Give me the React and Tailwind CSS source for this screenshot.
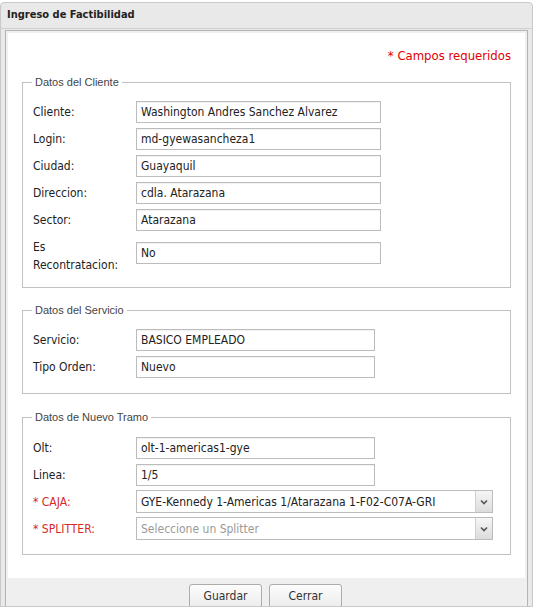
import React from 'react';

const ui = { fontFamily: '"DejaVu Sans Condensed", "Liberation Sans", sans-serif' };
const legendFont = { fontFamily: '"Liberation Sans", Arial, sans-serif' };

function Field({ label, value, wide, required, tall }) {
  return (
    <div className="flex items-center">
      <div className={`w-[103px] shrink-0 text-[12px] leading-[18px] ${required ? 'text-[#d42a2a]' : 'text-[#222]'}`}>
        {label}
      </div>
      <div className={`${wide ? 'w-[245px]' : 'w-[239px]'} h-[22px] border border-[#bcbcbc] bg-white px-[4px] flex items-center text-[12px] text-[#222] shadow-[inset_0_1px_1px_rgba(0,0,0,0.06)] ${tall ? 'self-start mt-[4px]' : ''}`}>
        {value}
      </div>
    </div>
  );
}

function Select({ label, value, placeholder }) {
  return (
    <div className="flex items-center">
      <div className="w-[103px] shrink-0 text-[12px] leading-[18px] text-[#d42a2a]">{label}</div>
      <div className="w-[357px] h-[23px] border border-[#bcbcbc] bg-white flex items-stretch">
        <div className={`flex-1 px-[4px] flex items-center text-[12px] ${placeholder ? 'text-[#9a9a9a]' : 'text-[#222]'}`}>
          {value}
        </div>
        <div className="w-[17px] border-l border-[#d0d0d0] bg-gradient-to-b from-[#f6f6f6] to-[#dcdcdc] flex items-center justify-center">
          <svg width="8" height="6" viewBox="0 0 8 6">
            <path d="M1 1.5 L4 4.5 L7 1.5" fill="none" stroke="#555" strokeWidth="1.6" />
          </svg>
        </div>
      </div>
    </div>
  );
}

function Group({ title, children, className }) {
  return (
    <fieldset className={`border border-[#c2c2c2] px-[10px] ${className}`}>
      <legend className="-ml-[1px] px-[3px] text-[11px] leading-[13px] text-[#444]" style={legendFont}>{title}</legend>
      {children}
    </fieldset>
  );
}

export default function App() {
  return (
    <div className="w-[533px] h-[607px] overflow-hidden bg-white" style={ui}>
      <div className="mt-[2px] h-[605px] border border-[#c9c9c9] rounded-t-[4px] bg-[#e9e9e9] flex flex-col overflow-hidden">
        <div className="h-[26px] shrink-0 px-[6px] flex items-center text-[11px] font-bold text-[#222] border-b border-[#cfcfcf]">
          Ingreso de Factibilidad
        </div>
        <div className="flex-1 px-[4px] pt-[1px]">
          <div className="h-full border-x border-t border-[#b4b4b4] bg-[#efefef]">
            <div className="bg-white h-[547px] mx-[1px] mt-[1px] px-[14px] pt-[15px] border border-[#f0f0f0]">
              <div className="text-right text-[13px] leading-[16px] text-[#e00000]">* Campos requeridos</div>

              <Group title="Datos del Cliente" className="mt-[12px] pt-[12px] pb-[13px]">
                <div className="flex flex-col gap-[5px]">
                  <Field wide label="Cliente:" value="Washington Andres Sanchez Alvarez" />
                  <Field wide label="Login:" value="md-gyewasancheza1" />
                  <Field wide label="Ciudad:" value="Guayaquil" />
                  <Field wide label="Direccion:" value="cdla. Atarazana" />
                  <Field wide label="Sector:" value="Atarazana" />
                  <div className="mt-[2px]">
                    <Field wide tall label={<>Es<br />Recontratacion:</>} value="No" />
                  </div>
                </div>
              </Group>

              <Group title="Datos del Servicio" className="mt-[16px] pt-[12px] pb-[15px]">
                <div className="flex flex-col gap-[5px]">
                  <Field label="Servicio:" value="BASICO EMPLEADO" />
                  <Field label="Tipo Orden:" value="Nuevo" />
                </div>
              </Group>

              <Group title="Datos de Nuevo Tramo" className="mt-[17px] pt-[13px] pb-[14px]">
                <div className="flex flex-col gap-[5px]">
                  <Field label="Olt:" value="olt-1-americas1-gye" />
                  <Field label="Linea:" value="1/5" />
                  <div className="-mt-[1px] flex flex-col gap-[4px]">
                    <Select label="* CAJA:" value="GYE-Kennedy 1-Americas 1/Atarazana 1-F02-C07A-GRI" />
                    <Select label="* SPLITTER:" value="Seleccione un Splitter" placeholder />
                  </div>
                </div>
              </Group>
            </div>
            <div className="flex justify-center gap-[7px] pt-[5px] pr-[2px]">
              {['Guardar', 'Cerrar'].map((b) => (
                <button key={b} className="w-[73px] h-[24px] border border-[#acacac] rounded-[3px] bg-gradient-to-b from-[#fdfdfd] to-[#ececec] text-[12px] text-[#333]">
                  {b}
                </button>
              ))}
            </div>
          </div>
        </div>
      </div>
    </div>
  );
}
